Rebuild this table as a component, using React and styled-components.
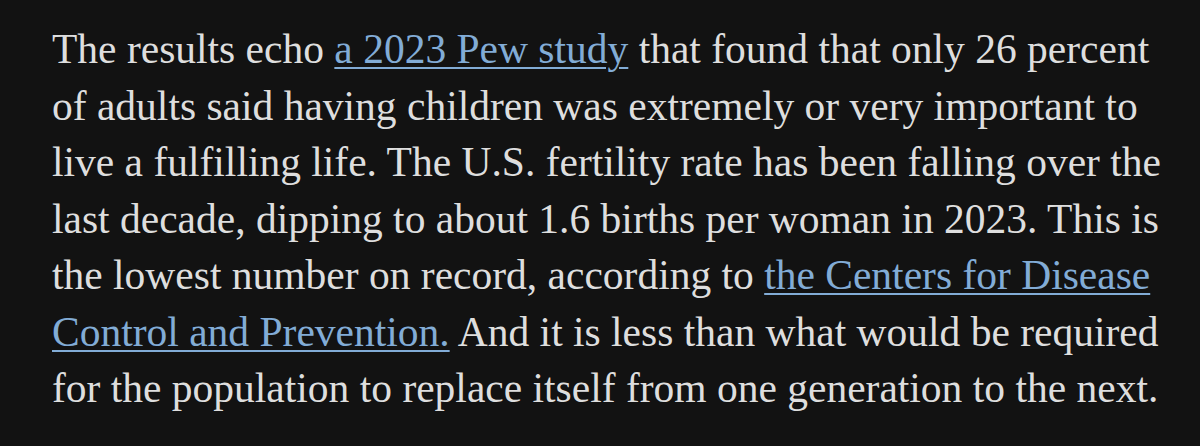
import React from "react";
import styled, { createGlobalStyle } from "styled-components";

const GlobalStyle = createGlobalStyle`
  html, body {
    margin: 0;
    padding: 0;
    background: #121212;
  }
`;

const Page = styled.div`
  width: 1200px;
  height: 446px;
  box-sizing: border-box;
  padding: 21px 0 0 52px;
  background: #121212;
  overflow: hidden;
`;

const Paragraph = styled.p`
  margin: 0;
  font-family: "Liberation Serif", "Times New Roman", serif;
  font-size: 41.5px;
  line-height: 56.5px;
  color: #dedede;
  white-space: nowrap;
`;

const Link = styled.a`
  color: #82acd6;
  text-decoration: underline;
  text-decoration-thickness: 2px;
  text-underline-offset: 4px;
`;

export default function App() {
  return (
    <>
      <GlobalStyle />
      <Page>
        <Paragraph>
          The results echo <Link href="#">a 2023 Pew study</Link> that found that only 26 percent
          <br />
          of adults said having children was extremely or very important to
          <br />
          live a fulfilling life. The U.S. fertility rate has been falling over the
          <br />
          last decade, dipping to about 1.6 births per woman in 2023. This is
          <br />
          the lowest number on record, according to{" "}
          <Link href="#">
            the Centers for Disease
            <br />
            Control and Prevention.
          </Link>{" "}
          And it is less than what would be required
          <br />
          for the population to replace itself from one generation to the next.
        </Paragraph>
      </Page>
    </>
  );
}
